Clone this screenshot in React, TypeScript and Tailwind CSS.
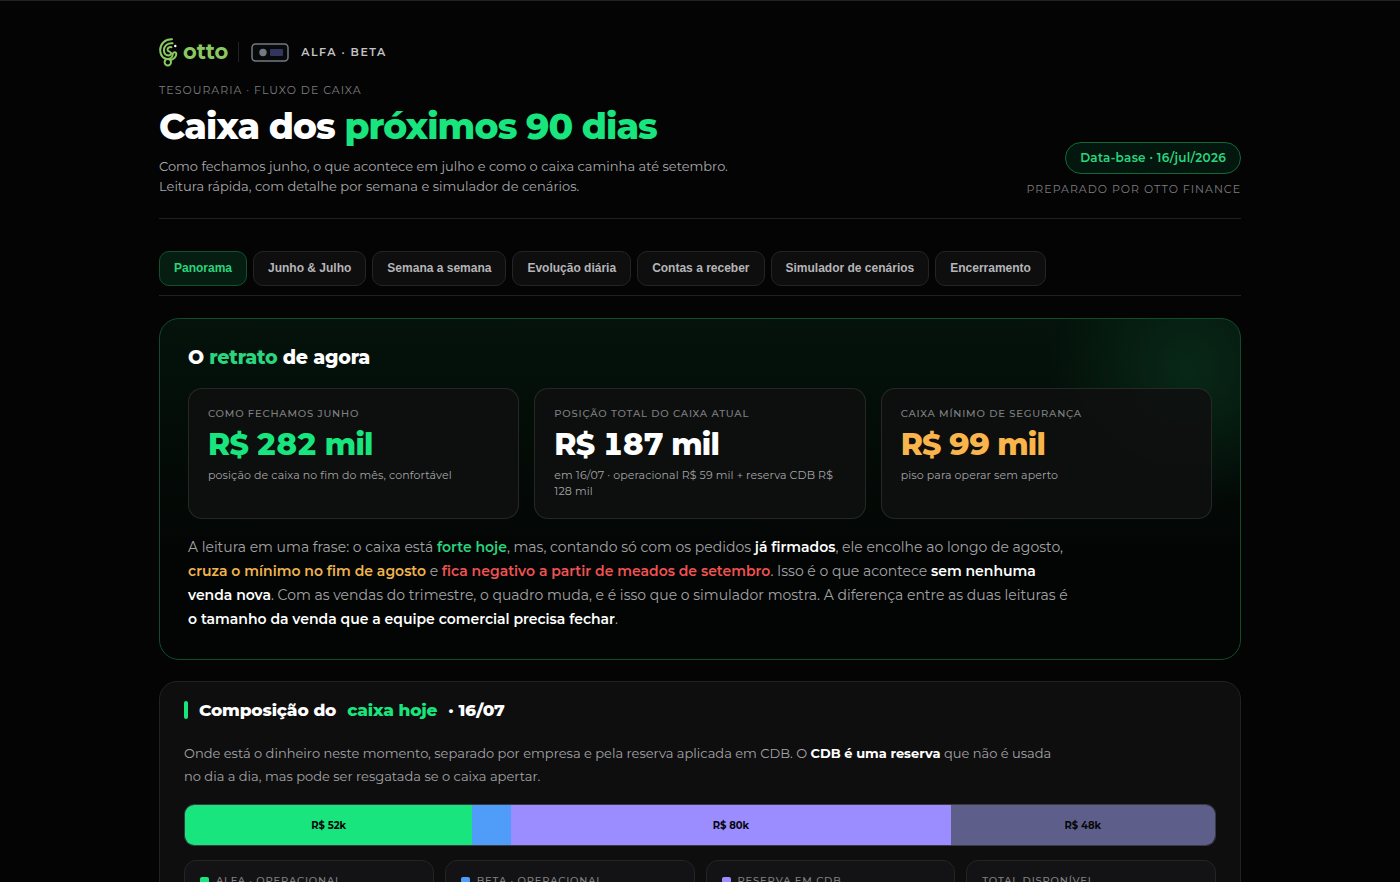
import React from 'react';

type Tone = 'green' | 'white' | 'amber';

interface Stat {
  label: string;
  value: string;
  note: string;
  tone: Tone;
}

interface Segment {
  id: string;
  weight: number;
  color: string;
  label?: string;
}

interface Account {
  name: string;
  dot?: string;
}

const tabs = [
  'Panorama',
  'Junho & Julho',
  'Semana a semana',
  'Evolução diária',
  'Contas a receber',
  'Simulador de cenários',
  'Encerramento'
];

const stats: Stat[] = [
  { label: 'Como fechamos junho', value: 'R$ 282 mil', note: 'posição de caixa no fim do mês, confortável', tone: 'green' },
  { label: 'Posição total do caixa atual', value: 'R$ 187 mil', note: 'em 16/07 · operacional R$ 59 mil + reserva CDB R$ 128 mil', tone: 'white' },
  { label: 'Caixa mínimo de segurança', value: 'R$ 99 mil', note: 'piso para operar sem aperto', tone: 'amber' }
];

const segments: Segment[] = [
  { id: 'alfa', weight: 288, color: 'bg-[#19e57e]', label: 'R$ 52k' },
  { id: 'beta', weight: 39, color: 'bg-[#4f9cf9]' },
  { id: 'cdb', weight: 440, color: 'bg-[#9b8cff]', label: 'R$ 80k' },
  { id: 'cdb-beta', weight: 265, color: 'bg-[#5d5f8a]', label: 'R$ 48k' }
];

const accounts: Account[] = [
  { name: 'Alfa · operacional', dot: 'bg-[#19e57e]' },
  { name: 'Beta · operacional', dot: 'bg-[#4f9cf9]' },
  { name: 'Reserva em CDB', dot: 'bg-[#9b8cff]' },
  { name: 'Total disponível' }
];

const toneClass: Record<Tone, string> = {
  green: 'text-[#19e57e]',
  white: 'text-white',
  amber: 'text-[#f9b54c]'
};

const OttoLogo: React.FC = () => (
  <div className="flex items-center gap-[5px] text-[#8ac962]">
    <svg viewBox="0 0 19 30" className="h-[30px] w-[19px]" fill="none" stroke="currentColor" aria-hidden="true">
      <g strokeWidth="2" strokeLinecap="round" strokeLinejoin="round">
        <path d="M13 2.200C6 2 1.200 6.800 1.200 13c0 4 1.700 6.800 4.400 8.300" />
        <path d="M13.500 6.300C8.500 5.800 4.900 9 4.900 13c0 1.600.4 3 1.300 4.200" />
        <path d="M12.500 10.200c-2.400-.5-4 .8-4 2.500 0 2.500 3.800 1.300 3.600 3.700-.2 1.900-2.700 2.400-4.700 1.600" />
        <path d="M5.600 21.300c3.400 1.300 5.900.4 7.200-1.300 1-1.300.5-3.100 1.700-4.200 1.200-1 2.900-.2 2.800 1.300-.2 2.800-2.700 4.900-5.600 6" />
        <circle cx="8.800" cy="25.300" r="3.200" />
      </g>
      <circle cx="16.300" cy="9" r="1.200" fill="#fff" stroke="none" />
    </svg>
    <span className="text-[21px] leading-[26px] font-bold">otto</span>
  </div>
);

const CompanyBadge: React.FC = () => (
  <svg viewBox="0 0 38 19" className="h-[19px] w-[38px]" aria-hidden="true">
    <rect x="1" y="1" width="36" height="17" rx="3.500" fill="#08090b" stroke="#727a83" strokeWidth="1.500" />
    <circle cx="12" cy="9.500" r="3.700" fill="#727a83" />
    <rect x="19" y="6" width="13" height="7" rx="1" fill="#34355f" />
  </svg>
);

const Header: React.FC = () => (
  <header className="flex items-end justify-between gap-6 border-b border-[#202020] pb-[21px]">
    <div className="pb-px">
      <div className="flex h-[30px] items-center">
        <OttoLogo />
        <span className="mr-3 ml-[10px] h-5 w-px bg-[#232323]" />
        <CompanyBadge />
        <span className="ml-3 text-[11px] font-semibold tracking-[1.5px] text-[#c4c4c6]">ALFA · BETA</span>
      </div>
      <p className="mt-[15px] text-[11px] leading-4 tracking-[1px] text-[#7c7c7f] uppercase">Tesouraria · Fluxo de caixa</p>
      <h1 className="mt-[7px] text-[36px] leading-[42px] font-extrabold tracking-tight text-white">
        Caixa dos <span className="text-[#19e57e]">próximos 90 dias</span>
      </h1>
      <p className="mt-[9px] max-w-[600px] text-[13px] leading-5 text-[#a9a9ac]">
        Como fechamos junho, o que acontece em julho e como o caixa caminha até setembro. Leitura rápida, com detalhe por
        semana e simulador de cenários.
      </p>
    </div>
    <div className="flex shrink-0 flex-col items-end">
      <span className="rounded-full border border-[#12673b] bg-[#04170e] px-[14px] py-[5px] text-[12px] leading-5 font-semibold tracking-wide text-[#2bd47f]">
        Data-base · 16/jul/2026
      </span>
      <p className="mt-[7px] text-[11px] leading-4 tracking-[1px] text-[#7c7c7f] uppercase">Preparado por Otto Finance</p>
    </div>
  </header>
);

const Tabs: React.FC = () => (
  <nav className="mt-8 flex flex-wrap gap-[6px] border-b border-[#202020] pb-[9px] font-['Liberation_Sans',Arial,sans-serif]">
    {tabs.map((tab, i) => (
      <button
        key={tab}
        type="button"
        className={`rounded-[10px] border px-[14px] py-2 text-[12px] leading-[17px] font-bold ${
          i === 0 ? 'border-[#10512f] bg-[#051e11] text-[#2bd47f]' : 'border-[#242426] bg-[#0e0e0f] text-[#b5b5b8]'
        }`}
      >
        {tab}
      </button>
    ))}
  </nav>
);

const StatCard: React.FC<{ stat: Stat }> = ({ stat }) => (
  <div className="rounded-[14px] border border-white/10 bg-[#0e0f0f]/90 px-[19px] pt-[17px] pb-[19px]">
    <p className="text-[10px] leading-4 font-medium tracking-[0.08em] text-[#808083] uppercase">{stat.label}</p>
    <p className={`mt-[5px] text-[30px] leading-9 font-extrabold tracking-tight tabular-nums ${toneClass[stat.tone]}`}>{stat.value}</p>
    <p className="mt-1 text-[11px] leading-4 tracking-[0.01em] text-[#a3a3a6]">{stat.note}</p>
  </div>
);

const Snapshot: React.FC = () => (
  <section className="mt-[22px] rounded-[20px] border border-[#0f4c2d] bg-[radial-gradient(circle_at_1028px_50px,#082817_0,transparent_140px),linear-gradient(180deg,#04130b,#030504_70%)] px-7 pt-[26px] pb-7">
    <h2 className="text-[19px] leading-[26px] font-extrabold tracking-[-0.01em] text-white">
      O <span className="text-[#2bd47f]">retrato</span> de agora
    </h2>
    <div className="mt-[17px] grid grid-cols-3 gap-[15px]">
      {stats.map((stat) => (
        <StatCard key={stat.label} stat={stat} />
      ))}
    </div>
    <p className="mt-4 max-w-[880px] text-[14px] leading-6 text-[#a3a3a6]">
      A leitura em uma frase: o caixa está <strong className="font-semibold text-[#2bd47f]">forte hoje</strong>, mas, contando
      só com os pedidos <strong className="font-semibold text-white">já firmados</strong>, ele encolhe ao longo de agosto,{' '}
      <strong className="font-semibold text-[#f0b44f]">cruza o mínimo no fim de agosto</strong> e{' '}
      <strong className="font-semibold text-[#f05252]">fica negativo a partir de meados de setembro</strong>. Isso é o que
      acontece <strong className="font-semibold text-white">sem nenhuma venda nova</strong>. Com as vendas do trimestre, o
      quadro muda, e é isso que o simulador mostra. A diferença entre as duas leituras é{' '}
      <strong className="font-semibold text-white">o tamanho da venda que a equipe comercial precisa fechar</strong>.
    </p>
  </section>
);

const Composition: React.FC = () => (
  <section className="mt-[21px] rounded-[18px] border border-[#222224] bg-[#0e0e0f] px-6 pt-[15px] pb-6">
    <h2 className="flex items-center text-[17px] leading-[26px] font-extrabold tracking-[-0.01em] text-white">
      <span className="mr-[11px] h-[18px] w-1 rounded-sm bg-[#19e57e]" />
      Composição do
      <span className="mx-[11px] text-[#19e57e]">caixa hoje</span>
      · 16/07
    </h2>
    <p className="mt-[19px] max-w-[880px] text-[13px] leading-[23px] text-[#a3a3a6]">
      Onde está o dinheiro neste momento, separado por empresa e pela reserva aplicada em CDB. O{' '}
      <strong className="text-white">CDB é uma reserva</strong> que não é usada no dia a dia, mas pode ser resgatada se o
      caixa apertar.
    </p>
    <div className="mt-4 flex h-[42px] overflow-hidden rounded-[10px] border border-[#3a3a40]">
      {segments.map((segment) => (
        <div
          key={segment.id}
          className={`flex items-center justify-center text-[10px] font-bold text-[#07070a] ${segment.color}`}
          style={{ flexGrow: segment.weight, flexBasis: 0 }}
        >
          {segment.label}
        </div>
      ))}
    </div>
    <div className="mt-[14px] grid grid-cols-4 gap-[11px]">
      {accounts.map((account) => (
        <div key={account.name} className="rounded-xl border border-[#242426] bg-[#131315] px-[15px] py-3">
          <p className="flex items-center gap-[7px] text-[10px] leading-4 font-medium tracking-[0.08em] text-[#808083] uppercase">
            {account.dot && <span className={`size-[9px] rounded-[2px] ${account.dot}`} />}
            {account.name}
          </p>
        </div>
      ))}
    </div>
  </section>
);

const App: React.FC = () => {
  return (
    <div className="min-h-screen border-t border-[#222222] bg-[#040404] font-['Montserrat',Inter,sans-serif]">
      <main className="mx-auto max-w-[1130px] px-6 pt-9">
        <Header />
        <Tabs />
        <Snapshot />
        <Composition />
      </main>
    </div>
  );
};

export default App;
